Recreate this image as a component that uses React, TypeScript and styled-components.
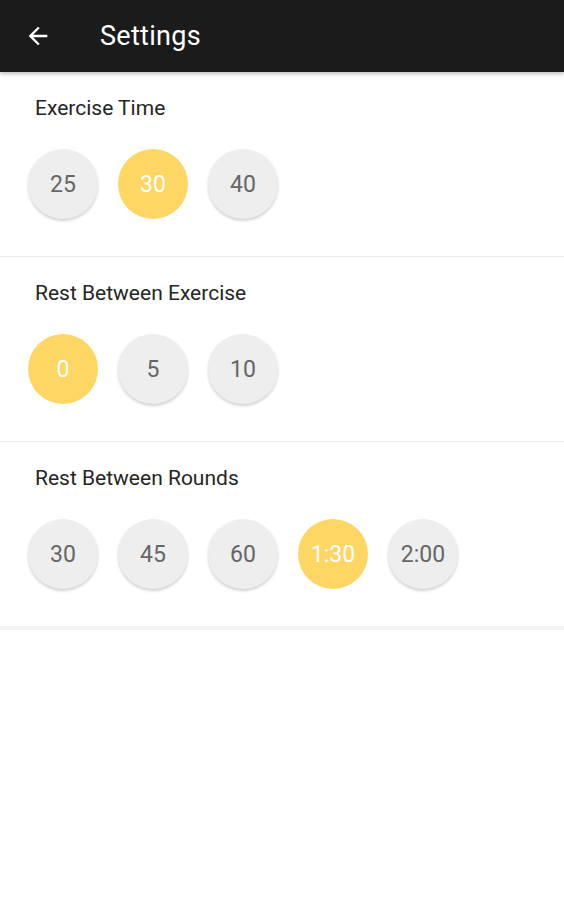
import React, { useState } from 'react';
import styled, { createGlobalStyle } from 'styled-components';

const GlobalStyle = createGlobalStyle`
  body {
    margin: 0;
    background: #ffffff;
    font-family: Roboto, "Noto Sans", sans-serif;
  }
`;

const Page = styled.div`
  width: 564px;
  min-height: 900px;
  background: #ffffff;
`;

const Toolbar = styled.header`
  height: 72px;
  background: #1b1b1b;
  display: flex;
  align-items: center;
  padding-left: 24px;
  box-shadow: 0 2px 4px rgba(0, 0, 0, 0.25);
  position: relative;
  z-index: 1;
`;

const BackButton = styled.button`
  width: 28px;
  height: 28px;
  padding: 0;
  border: none;
  background: transparent;
  display: flex;
  align-items: center;
  justify-content: center;
  cursor: pointer;
`;

const Title = styled.h1`
  margin: 0 0 0 48px;
  color: #ffffff;
  font-size: 27px;
  font-weight: 400;
  letter-spacing: 0.3px;
`;

const Section = styled.section<{ $last?: boolean }>`
  padding: 25px 0 37px 0;
  border-bottom: ${(p) => (p.$last ? '4px solid #f5f5f5' : '1px solid #ececec')};
`;

const SectionTitle = styled.h2`
  margin: 0 0 30px 35px;
  font-size: 21px;
  line-height: 22px;
  font-weight: 400;
  color: #252525;
`;

const Options = styled.div`
  display: flex;
  gap: 20px;
  padding-left: 28px;
`;

const Option = styled.button<{ $selected: boolean }>`
  width: 70px;
  height: 70px;
  border-radius: 50%;
  border: none;
  padding: 0;
  font-family: Roboto, "Noto Sans", sans-serif;
  font-size: 23px;
  font-weight: 400;
  color: ${(p) => (p.$selected ? '#ffffff' : '#666666')};
  background: ${(p) => (p.$selected ? '#fdd664' : '#eeeeee')};
  box-shadow: ${(p) => (p.$selected ? 'none' : '0 2px 3px rgba(0, 0, 0, 0.18)')};
  cursor: pointer;
`;

const ArrowBack = () => (
  <svg width="28" height="28" viewBox="0 0 24 24" fill="#ffffff">
    <path d="M20 11H7.83l5.59-5.59L12 4l-8 8 8 8 1.41-1.41L7.83 13H20v-2z" />
  </svg>
);

type Setting = { title: string; values: string[]; initial: string };

const settings: Setting[] = [
  { title: 'Exercise Time', values: ['25', '30', '40'], initial: '30' },
  { title: 'Rest Between Exercise', values: ['0', '5', '10'], initial: '0' },
  { title: 'Rest Between Rounds', values: ['30', '45', '60', '1:30', '2:00'], initial: '1:30' },
];

const SettingGroup: React.FC<{ setting: Setting; last?: boolean }> = ({ setting, last }) => {
  const [value, setValue] = useState(setting.initial);
  return (
    <Section $last={last}>
      <SectionTitle>{setting.title}</SectionTitle>
      <Options>
        {setting.values.map((v) => (
          <Option key={v} $selected={v === value} onClick={() => setValue(v)}>
            {v}
          </Option>
        ))}
      </Options>
    </Section>
  );
};

const App: React.FC = () => (
  <Page>
    <GlobalStyle />
    <Toolbar>
      <BackButton aria-label="Back">
        <ArrowBack />
      </BackButton>
      <Title>Settings</Title>
    </Toolbar>
    {settings.map((s, i) => (
      <SettingGroup key={s.title} setting={s} last={i === settings.length - 1} />
    ))}
  </Page>
);

export default App;
